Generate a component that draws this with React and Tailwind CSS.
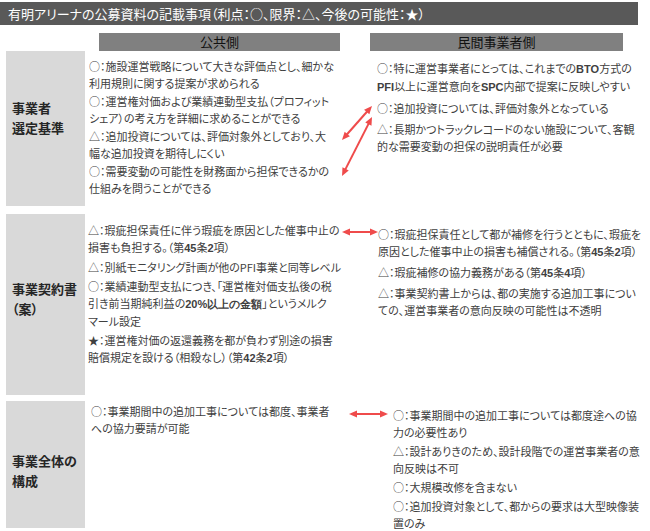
const ARROWS = [
  [372, 106, 342, 140],
  [372, 117, 342, 176],
  [342, 232, 378, 232],
  [349, 414, 388, 414],
];

function Arrow({ x1, y1, x2, y2 }) {
  const dx = x2 - x1;
  const dy = y2 - y1;
  const len = Math.hypot(dx, dy);
  const ux = dx / len;
  const uy = dy / len;
  const L = 8;
  const W = 3.5;
  const head = (tx, ty, dir) => {
    const bx = tx - dir * ux * L;
    const by = ty - dir * uy * L;
    return `${tx},${ty} ${bx - uy * W},${by + ux * W} ${bx + uy * W},${by - ux * W}`;
  };
  return (
    <g>
      <line
        x1={x1 + ux * 6}
        y1={y1 + uy * 6}
        x2={x2 - ux * 6}
        y2={y2 - uy * 6}
        stroke="#ef4b4b"
        strokeWidth="2"
      />
      <polygon points={head(x2, y2, 1)} fill="#ef4b4b" />
      <polygon points={head(x1, y1, -1)} fill="#ef4b4b" />
    </g>
  );
}

function B({ children }) {
  return <b className="font-['Liberation_Sans',sans-serif] font-bold">{children}</b>;
}

function Label({ lines, top }) {
  return (
    <div className={`bg-[#d9d9d9] pl-[6px] text-[13px] leading-[20px] font-bold text-[#262626] ${top}`}>
      {lines.map((l, i) => (
        <div key={i}>{l}</div>
      ))}
    </div>
  );
}

function Items({ items, gap }) {
  return (
    <div className={`flex flex-col ${gap}`}>
      {items.map((lines, i) => (
        <p key={i} className="whitespace-nowrap">
          {lines.map((l, j) => (
            <span key={j} className="block">
              {l}
            </span>
          ))}
        </p>
      ))}
    </div>
  );
}

export default function App() {
  return (
    <div className="relative w-[650px] h-[531px] overflow-hidden bg-white font-['Noto_Sans_CJK_JP',sans-serif] text-[#404040] [font-feature-settings:'palt']">
      <div className="pt-[2px]">
        <div className="w-[638px] h-[23px] bg-[#595959] text-white text-[13px] pl-[8px] flex items-center">
          有明アリーナの公募資料の記載事項（利点：○、限界：△、今後の可能性：★）
        </div>
      </div>

      <div className="grid grid-cols-[79px_285px_1fr] pl-[6px] mt-[8px]">
        <div />
        <div className="ml-[14px] w-[241px] h-[18px] bg-[#808080] flex items-center justify-center text-[13px] text-[#111]">
          公共側
        </div>
        <div className="w-[253px] h-[18px] bg-[#808080] flex items-center justify-center text-[13px] text-[#111]">
          民間事業者側
        </div>
      </div>

      <div className="grid grid-cols-[79px_285px_1fr] pl-[6px] text-[11px] leading-[17px]">
        {/* 事業者選定基準 */}
        <Label lines={['事業者', '選定基準']} top="h-[155px] pt-[47px]" />
        <div className="pl-[4px] pt-[7px]">
          <Items
            gap="gap-[1px]"
            items={[
              ['○：施設運営戦略について大きな評価点とし、細かな', '利用規則に関する提案が求められる'],
              ['○：運営権対価および業績連動型支払（プロフィット', 'シェア）の考え方を詳細に求めることができる'],
              ['△：追加投資については、評価対象外としており、大', '幅な追加投資を期待しにくい'],
              ['○：需要変動の可能性を財務面から担保できるかの', '仕組みを問うことができる'],
            ]}
          />
        </div>
        <div className="pl-[7px] pt-[9px]">
          <Items
            gap="gap-[4px]"
            items={[
              [
                <>○：特に運営事業者にとっては、これまでの<B>BTO</B>方式の</>,
                <><B>PFI</B>以上に運営意向を<B>SPC</B>内部で提案に反映しやすい</>,
              ],
              ['○：追加投資については、評価対象外となっている'],
              ['△：長期かつトラックレコードのない施設について、客観', '的な需要変動の担保の説明責任が必要'],
            ]}
          />
        </div>

        <div className="col-span-3 h-[8px]" />

        {/* 事業契約書（案） */}
        <Label lines={['事業契約書', '（案）']} top="h-[181px] pt-[65px]" />
        <div className="pl-[3px] pt-[8px]">
          <Items
            gap="gap-[2px]"
            items={[
              ['△：瑕疵担保責任に伴う瑕疵を原因とした催事中止の', <>損害も負担する。（第<B>45</B>条<B>2</B>項）</>],
              ['△：別紙モニタリング計画が他のPFI事業と同等レベル'],
              [
                '○：業績連動型支払につき、「運営権対価支払後の税',
                <>引き前当期純利益の<B>20%以上の金額</B>」というメルク</>,
                'マール設定',
              ],
              ['★：運営権対価の返還義務を都が負わず別途の損害', <>賠償規定を設ける（相殺なし）（第<B>42</B>条<B>2</B>項）</>],
            ]}
          />
        </div>
        <div className="pl-[8px] pt-[12px]">
          <Items
            gap="gap-[3px]"
            items={[
              ['○：瑕疵担保責任として都が補修を行うとともに、瑕疵を', <>原因とした催事中止の損害も補償される。（第<B>45</B>条<B>2</B>項）</>],
              [<>△：瑕疵補修の協力義務がある（第<B>45</B>条<B>4</B>項）</>],
              ['△：事業契約書上からは、都の実施する追加工事につい', 'ての、運営事業者の意向反映の可能性は不透明'],
            ]}
          />
        </div>

        <div className="col-span-3 h-[6px]" />

        {/* 事業全体の構成 */}
        <Label lines={['事業全体の', '構成']} top="h-[127px] pt-[50px]" />
        <div className="pl-[6px] pt-[2px]">
          <Items
            gap="gap-[2px]"
            items={[['○：事業期間中の追加工事については都度、事業者', 'への協力要請が可能']]}
          />
        </div>
        <div className="pl-[23px] pt-[6px]">
          <Items
            gap="gap-[2px]"
            items={[
              ['○：事業期間中の追加工事については都度途への協', '力の必要性あり'],
              ['△：設計ありきのため、設計段階での運営事業者の意', '向反映は不可'],
              ['○：大規模改修を含まない'],
              ['○：追加投資対象として、都からの要求は大型映像装', '置のみ'],
            ]}
          />
        </div>
      </div>

      <svg className="absolute inset-0 pointer-events-none" width="650" height="531">
        {ARROWS.map(([x1, y1, x2, y2], i) => (
          <Arrow key={i} x1={x1} y1={y1} x2={x2} y2={y2} />
        ))}
      </svg>
    </div>
  );
}
